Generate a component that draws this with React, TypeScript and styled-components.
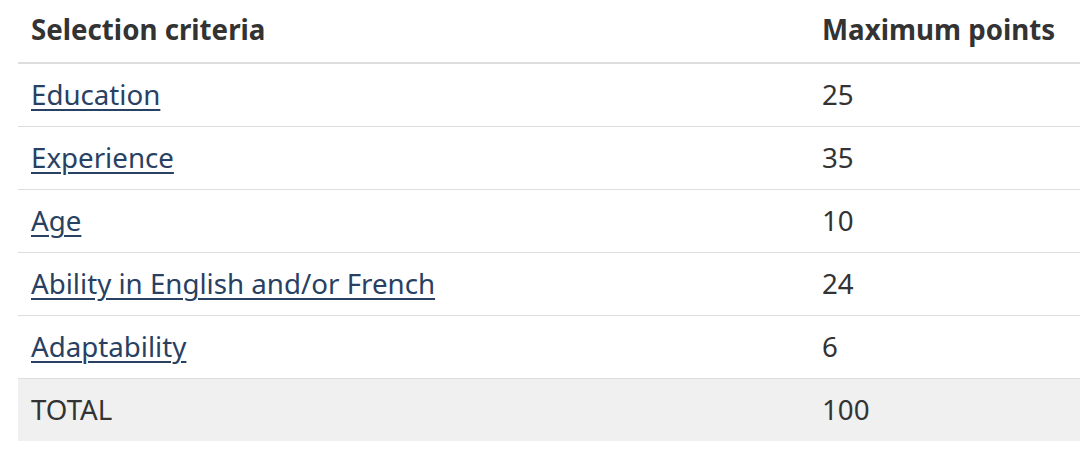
import styled, { createGlobalStyle } from "styled-components";

const GlobalStyle = createGlobalStyle`
  body {
    margin: 0;
    background: #fff;
    overflow: hidden;
    font-family: "Noto Sans", "Open Sans", sans-serif;
    color: #333;
  }
`;

const Page = styled.main`
  width: 1080px;
  height: 453px;
  overflow: hidden;
  padding-left: 18px;
  box-sizing: border-box;
`;

const Table = styled.table`
  width: 1100px;
  table-layout: fixed;
  border-collapse: collapse;
  font-size: 27.7px;
  line-height: 1.4;
`;

const HeadCell = styled.th`
  text-align: left;
  font-weight: 700;
  padding: 10px 13px 12px;
  height: 40px;
  border-bottom: 2px solid #ddd;
  vertical-align: top;
  box-sizing: content-box;
`;

const Row = styled.tr<{ $total?: boolean }>`
  background: ${({ $total }) => ($total ? "#f0f0f0" : "transparent")};
  border-top: 1px solid #ddd;
`;

const Cell = styled.td`
  padding: 0 13px 2px;
  height: 60px;
  vertical-align: middle;
`;

const Link = styled.a`
  color: #284162;
  text-decoration: underline;
  text-decoration-thickness: 2px;
  text-underline-offset: 4px;
`;

const rows = [
  { label: "Education", points: "25" },
  { label: "Experience", points: "35" },
  { label: "Age", points: "10" },
  { label: "Ability in English and/or French", points: "24" },
  { label: "Adaptability", points: "6" },
];

export default function App() {
  return (
    <Page>
      <GlobalStyle />
      <Table>
        <colgroup>
          <col style={{ width: 791 }} />
          <col />
        </colgroup>
        <thead>
          <tr>
            <HeadCell>Selection criteria</HeadCell>
            <HeadCell>Maximum points</HeadCell>
          </tr>
        </thead>
        <tbody>
          {rows.map((r) => (
            <Row key={r.label}>
              <Cell>
                <Link href="#">{r.label}</Link>
              </Cell>
              <Cell>{r.points}</Cell>
            </Row>
          ))}
          <Row $total>
            <Cell>TOTAL</Cell>
            <Cell>100</Cell>
          </Row>
        </tbody>
      </Table>
    </Page>
  );
}
